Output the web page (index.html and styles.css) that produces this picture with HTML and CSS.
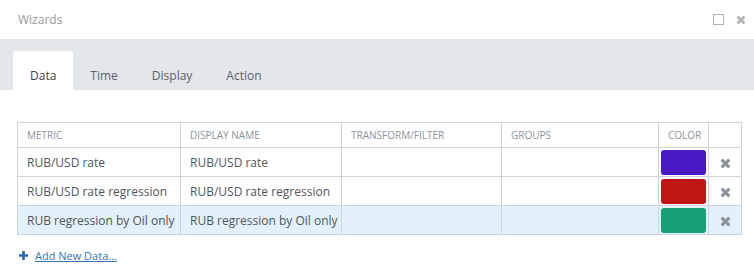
FILE: index.html
```html
<!DOCTYPE html>
<html>
<head>
<meta charset="utf-8">
<link rel="stylesheet" href="styles.css">
</head>
<body>
<div class="dialog">
  <div class="titlebar">
    <span class="title">Wizards</span>
    <div class="win-controls">
      <span class="maximize"></span>
      <svg class="close" width="10" height="10" viewBox="0 0 10 10"><path d="M1.5 1.5 L8.5 8.5 M8.5 1.5 L1.5 8.5" stroke="#b3b3b3" stroke-width="2.6" stroke-linecap="butt"/></svg>
    </div>
  </div>
  <div class="tabbar">
    <div class="tab active">Data</div>
    <div class="tab">Time</div>
    <div class="tab">Display</div>
    <div class="tab">Action</div>
  </div>
  <div class="content">
    <table class="grid">
      <colgroup>
        <col class="c1"><col class="c2"><col class="c3"><col class="c4"><col class="c5"><col class="c6">
      </colgroup>
      <thead>
        <tr><th>Metric</th><th>Display Name</th><th>Transform/Filter</th><th>Groups</th><th class="center">Color</th><th></th></tr>
      </thead>
      <tbody>
        <tr>
          <td>RUB/USD rate</td><td>RUB/USD rate</td><td></td><td></td>
          <td class="swatch-cell"><div class="swatch purple"></div></td>
          <td class="del-cell"><svg width="11" height="11" viewBox="0 0 10 10"><path d="M1.5 1.5 L8.5 8.5 M8.5 1.5 L1.5 8.5" stroke="#8c939a" stroke-width="2.8"/></svg></td>
        </tr>
        <tr>
          <td>RUB/USD rate regression</td><td>RUB/USD rate regression</td><td></td><td></td>
          <td class="swatch-cell"><div class="swatch red"></div></td>
          <td class="del-cell"><svg width="11" height="11" viewBox="0 0 10 10"><path d="M1.5 1.5 L8.5 8.5 M8.5 1.5 L1.5 8.5" stroke="#8c939a" stroke-width="2.8"/></svg></td>
        </tr>
        <tr class="selected">
          <td>RUB regression by Oil only</td><td>RUB regression by Oil only</td><td></td><td></td>
          <td class="swatch-cell"><div class="swatch green"></div></td>
          <td class="del-cell"><svg width="11" height="11" viewBox="0 0 10 10"><path d="M1.5 1.5 L8.5 8.5 M8.5 1.5 L1.5 8.5" stroke="#8c939a" stroke-width="2.8"/></svg></td>
        </tr>
      </tbody>
    </table>
    <div class="add-row">
      <svg class="plus" width="9" height="9" viewBox="0 0 10 10"><path d="M5 0 V10 M0 5 H10" stroke="#2a6bb3" stroke-width="3"/></svg>
      <a class="add-link" href="#">Add New Data...</a>
    </div>
  </div>
</div>
</body>
</html>
```

FILE: styles.css
```css
html, body {
  margin: 0;
  padding: 0;
  background: #ffffff;
}
body {
  font-family: "Open Sans", "Liberation Sans", sans-serif;
  color: #4a4f55;
}
.dialog {
  width: 754px;
}
.titlebar {
  height: 39px;
  display: flex;
  align-items: center;
  justify-content: space-between;
  padding: 0 8px 0 18px;
  box-sizing: border-box;
}
.title {
  font-size: 12px;
  color: #9a9a9a;
}
.win-controls {
  display: flex;
  align-items: center;
  gap: 12px;
}
.maximize {
  display: block;
  width: 9px;
  height: 9px;
  border: 1px solid #b3b3b3;
}
.close {
  display: block;
}
.tabbar {
  height: 51px;
  background: #e4e7ea;
  display: flex;
  align-items: flex-end;
  padding-left: 13px;
  box-sizing: border-box;
}
.tab {
  height: 39px;
  box-sizing: border-box;
  padding: 16px 17px 0 17px;
  font-size: 12px;
  line-height: 18px;
  color: #5b6168;
}
.tab.active {
  background: #ffffff;
  border-radius: 3px 3px 0 0;
  color: #3c4146;
}
.content {
  padding: 32px 13px 0 17px;
}
.grid {
  width: 724px;
  border-collapse: collapse;
  table-layout: fixed;
  border: 1px solid #cfd4d9;
}
.c1 { width: 163px; }
.c2 { width: 161px; }
.c3 { width: 160px; }
.c4 { width: 157px; }
.c5 { width: 50px; }
.c6 { width: 33px; }
.grid th {
  height: 24px;
  padding: 0 9px;
  text-align: left;
  font-weight: 400;
  font-size: 10px;
  text-transform: uppercase;
  color: #8b939b;
  border: 1px solid #cfd4d9;
  white-space: nowrap;
  overflow: hidden;
}
.grid th.center {
  text-align: center;
}
.grid td {
  height: 28px;
  padding: 0 9px;
  font-size: 12px;
  color: #50565c;
  border: 1px solid #cfd4d9;
  white-space: nowrap;
  overflow: hidden;
}
.grid tr.selected td {
  background: #e3f1fa;
}
.grid td.swatch-cell {
  padding: 0 2px;
}
.swatch {
  height: 25px;
  border-radius: 3px;
}
.swatch.purple { background: #4a19c3; }
.swatch.red { background: #c21616; }
.swatch.green { background: #16a075; }
.grid td.del-cell {
  padding: 0;
  text-align: center;
}
.del-cell svg {
  display: inline-block;
  vertical-align: middle;
}
.add-row {
  display: flex;
  align-items: center;
  gap: 7px;
  margin-top: 13px;
  padding-left: 2px;
}
.plus {
  display: block;
}
.add-link {
  font-size: 11px;
  color: #3173b5;
  text-decoration: underline;
}
```
